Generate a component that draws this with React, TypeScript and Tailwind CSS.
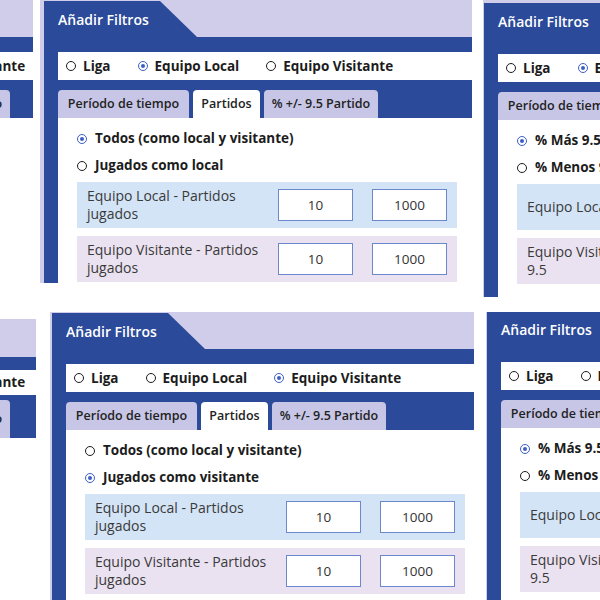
type Team = 'local' | 'visitante';

interface PanelProps {
  team: Team;
  tab: number; // 0..2
  opt: number; // 0..1
  tight?: boolean;
}

function Radio({ on }: { on: boolean }) {
  if (on)
    return (
      <span className="w-[10px] h-[10px] rounded-full border-[1.5px] border-[#3d5fc4] flex items-center justify-center shrink-0">
        <span className="w-[4px] h-[4px] rounded-full bg-[#3d5fc4]" />
      </span>
    );
  return <span className="w-[10px] h-[10px] rounded-full border-[1.5px] border-[#1c1c1c] shrink-0" />;
}

const TABS = [
  { label: 'Período de tiempo', w: 'w-[131px]' },
  { label: 'Partidos', w: 'w-[67px]' },
  { label: '% +/- 9.5 Partido', w: 'w-[114px]' },
];

function Panel({ team, tab, opt, tight }: PanelProps) {
  const pct = tab === 2;
  const options = pct
    ? ['% Más 9.5', '% Menos 9.5']
    : ['Todos (como local y visitante)', team === 'visitante' ? 'Jugados como visitante' : 'Jugados como local'];
  const rows = pct
    ? ['Equipo Local - % Más 9.5', 'Equipo Visitante - % Más 9.5']
    : ['Equipo Local - Partidos jugados', 'Equipo Visitante - Partidos jugados'];
  const values = pct ? ['0', '100'] : ['10', '1000'];

  return (
    <div className="w-[432px] bg-[#cfcde9] pt-px pl-[4px] font-['Open_Sans',sans-serif]">
      <div className="bg-[#2b4a9a]">
        <div className={tight ? 'h-[38px] bg-[#cfcde9] flex' : 'h-[36px] bg-[#cfcde9] flex'}>
          <div className="w-[153px] h-full bg-[#2b4a9a] [clip-path:polygon(0_0,116px_0,100%_100%,0_100%)] pl-[14px] flex items-center text-white text-[14px] font-semibold">
            Añadir Filtros
          </div>
        </div>
        <div className={tight ? 'pl-[14px] pt-[13px]' : 'pl-[14px] pt-[15px]'}>
          <div className={(tight ? 'h-[25px]' : 'h-[28px]') + ' bg-white flex items-center pl-[8px] gap-[27px] text-[13.5px] font-bold text-[#1c1c1c]'}>
            <div className="flex items-center gap-[7px]">
              <Radio on={false} />
              <span>Liga</span>
            </div>
            <div className="flex items-center gap-[7px]">
              <Radio on={team === 'local'} />
              <span>Equipo Local</span>
            </div>
            <div className="flex items-center gap-[7px] whitespace-nowrap">
              <Radio on={team === 'visitante'} />
              <span>Equipo Visitante</span>
            </div>
          </div>

          <div className={(tight ? 'mt-[5px]' : 'mt-[10px]') + ' flex gap-[4px]'}>
            {TABS.map((t, i) => (
              <div
                key={t.label}
                className={
                  (tight ? 'h-[38px] ' : 'h-[28px] ') +
                  (i === tab ? 'bg-white ' : 'bg-[#c8c6e6] ') +
                  t.w +
                  ' shrink-0 rounded-t-[4px] flex items-center justify-center whitespace-nowrap text-[12.5px] font-semibold text-[#222]'
                }
              >
                {t.label}
              </div>
            ))}
          </div>

          <div className="bg-white pt-[7px] pl-[19px] pr-[15px] pb-[30px]">
            {options.map((o, i) => (
              <div key={o} className="h-[27px] flex items-center gap-[8px] text-[13.5px] font-bold text-[#1c1c1c] whitespace-nowrap">
                <Radio on={i === opt} />
                <span>{o}</span>
              </div>
            ))}
            <div className="mt-[3px] flex flex-col gap-[8px]">
              {rows.map((r, i) => (
                <div
                  key={r}
                  className={(i === 0 ? 'bg-[#d3e4f6] ' : 'bg-[#ebe2f1] ') + 'h-[46px] flex items-center pl-[10px] pr-[10px] gap-[12px]'}
                >
                  <div className="flex-1 text-[14px] leading-[18px] text-[#3a3a3a]">{r}</div>
                  <div className="flex gap-[19px]">
                    {values.map((v) => (
                      <div key={v} className="w-[75px] h-[32px] bg-white border border-[#6b88cf] flex items-center justify-center text-[13.5px] text-[#333]">
                        {v}
                      </div>
                    ))}
                  </div>
                </div>
              ))}
            </div>
          </div>
        </div>
      </div>
    </div>
  );
}

export default function App() {
  return (
    <div className="relative w-[600px] h-[600px] overflow-hidden bg-white">
      {/* top-left crop */}
      <div className="absolute left-0 top-0 w-[33px] h-[118px] overflow-hidden">
        <div className="ml-[-328px]">
          <Panel team="local" tab={1} opt={0} />
        </div>
      </div>
      {/* bottom-left crop */}
      <div className="absolute left-0 top-[319px] w-[36px] h-[119px] overflow-hidden">
        <div className="ml-[-328px] mt-[-1px]">
          <Panel team="visitante" tab={1} opt={1} tight />
        </div>
      </div>
      {/* main */}
      <div className="absolute left-[40px] top-0 w-[432px] h-[283px] overflow-hidden">
        <Panel team="local" tab={1} opt={0} />
      </div>
      {/* bottom middle */}
      <div className="absolute left-[50px] top-[312px] w-[424px] h-[288px] overflow-hidden">
        <div className="ml-[-2px]">
          <Panel team="visitante" tab={1} opt={1} />
        </div>
      </div>
      {/* top right */}
      <div className="absolute left-[483px] top-0 w-[117px] h-[297px] overflow-hidden bg-[#cfcde9]">
        <div className="ml-[-3px] mt-[2px]">
          <Panel team="local" tab={2} opt={0} />
        </div>
      </div>
      {/* bottom right */}
      <div className="absolute left-[486px] top-[312px] w-[114px] h-[288px] overflow-hidden">
        <div className="ml-[-3px] mt-[-2px]">
          <Panel team="visitante" tab={2} opt={0} />
        </div>
      </div>
    </div>
  );
}
